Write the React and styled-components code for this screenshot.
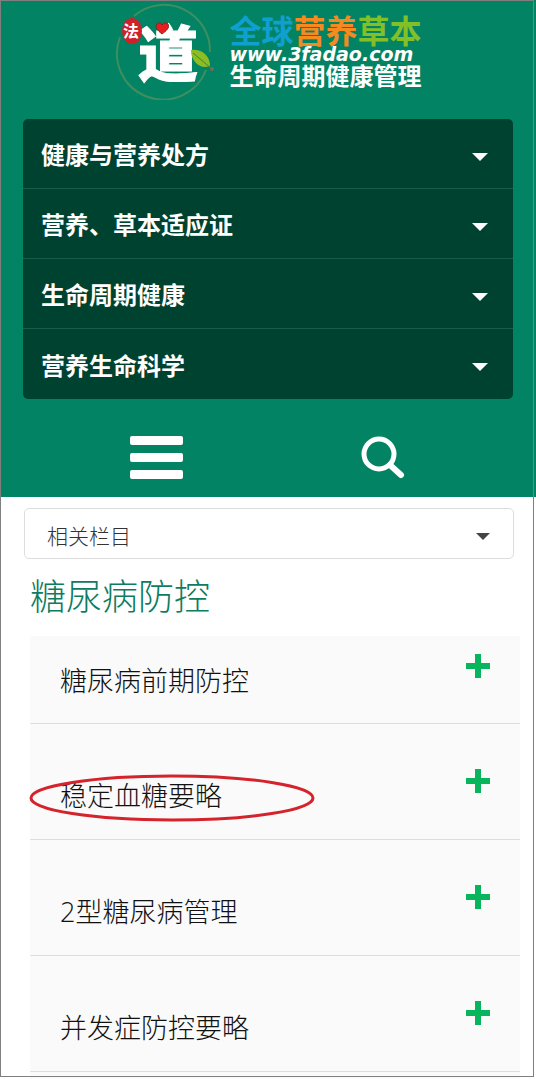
import React, { useState } from 'react';
import styled, { createGlobalStyle } from 'styled-components';

const GlobalStyle = createGlobalStyle`
  * {
    box-sizing: border-box;
  }
  body {
    margin: 0;
    background: #fff;
    font-family: "Open Sans", "Noto Sans CJK SC", sans-serif;
  }
  button, select {
    font-family: inherit;
  }
`;

const Page = styled.div`
  position: relative;
  display: flex;
  flex-direction: column;
  min-height: 100vh;
`;

const Frame = styled.div`
  position: absolute;
  top: 0;
  left: 0;
  right: 2px;
  bottom: 2px;
  border: 1px solid #7f7f7f;
  pointer-events: none;
`;

const Header = styled.header`
  background: #028464;
`;

const Brand = styled.a`
  display: flex;
  justify-content: center;
  gap: 15px;
  height: 119px;
  text-decoration: none;
`;

const BrandText = styled.div`
  display: flex;
  flex-direction: column;
  padding-top: 13px;
  color: #fff;
  white-space: nowrap;
`;

const BrandName = styled.div`
  font-family: "Noto Sans CJK SC", sans-serif;
  font-size: 32px;
  line-height: 33px;
  font-weight: 700;
`;

const Tint = styled.span`
  color: ${(props) => props.$color};
`;

const BrandUrl = styled.div`
  font-family: "DejaVu Sans", sans-serif;
  font-size: 19px;
  line-height: 17px;
  font-weight: 700;
  font-style: italic;
`;

const BrandSlogan = styled.div`
  font-family: "Noto Sans CJK SC", sans-serif;
  font-size: 24px;
  line-height: 24px;
  font-weight: 700;
`;

const Menu = styled.nav`
  margin: 0 23px;
  border-radius: 5px;
  background: #004230;
  overflow: hidden;
`;

const MenuItem = styled.button`
  display: flex;
  align-items: center;
  justify-content: space-between;
  width: 100%;
  height: 70px;
  padding: 0 25px 0 18px;
  border: 0;
  border-bottom: 1px solid #1c5a49;
  background: none;
  color: #fff;
  font-size: 24px;
  font-weight: 700;
  cursor: pointer;

  &:last-child {
    border-bottom: 0;
  }
`;

const Caret = styled.span`
  width: 0;
  height: 0;
  margin-top: 6px;
  border: 8px solid transparent;
  border-top-color: #fff;
  border-bottom: 0;
`;

const Tools = styled.div`
  display: grid;
  grid-template-columns: 1fr 1fr;
  justify-items: center;
  align-items: center;
  height: 98px;
  padding: 18px 40px 0 43px;
`;

const IconButton = styled.button`
  display: flex;
  padding: 0;
  border: 0;
  background: none;
  color: #fff;
  cursor: pointer;
`;

const SelectBox = styled.div`
  position: relative;
  margin: 11px 22px 0 24px;
`;

const Select = styled.select`
  appearance: none;
  display: block;
  width: 100%;
  height: 51px;
  padding: 4px 50px 0 22px;
  border: 1px solid #ddd;
  border-radius: 5px;
  background: #fff;
  color: #333;
  font-size: 21px;
  font-weight: 300;
`;

const SelectCaret = styled.span`
  position: absolute;
  top: 25px;
  right: 24px;
  border: 7px solid transparent;
  border-top-color: #444;
  border-bottom: 0;
  pointer-events: none;
`;

const Title = styled.h1`
  margin: 11px 30px 12px;
  color: #0f7b60;
  font-size: 36px;
  line-height: 54px;
  font-weight: 300;
`;

const List = styled.ul`
  flex: 1;
  margin: 0 16px 0 30px;
  padding: 0;
  background: #fafafa;
  list-style: none;
`;

const Item = styled.li`
  position: relative;
  display: flex;
  align-items: flex-start;
  justify-content: space-between;
  padding: 45px 30px 16px;
  border-bottom: 1px solid #ddd;

  &:first-child {
    padding: 18px 30px 15px;
  }
`;

const ItemLink = styled.a`
  color: #111;
  font-size: 27px;
  line-height: 54px;
  font-weight: 300;
  text-decoration: none;
`;

const Circle = styled.svg`
  position: absolute;
  left: -2px;
  bottom: 17px;
  pointer-events: none;
`;

const menu = ['健康与营养处方', '营养、草本适应证', '生命周期健康', '营养生命科学'];

const topics = [
  { name: '糖尿病前期防控' },
  { name: '稳定血糖要略', marked: true },
  { name: '2型糖尿病管理' },
  { name: '并发症防控要略' },
];

const Emblem = () => (
  <svg width="100" height="100" viewBox="0 0 100 100" fontFamily="Noto Sans CJK SC, sans-serif" fill="#fff">
    <path d="M20 16A46 46 0 0 1 96 52" fill="none" stroke="#3f8e60" strokeWidth="2" />
    <path d="M6 37A46 46 0 1 0 92 70" fill="none" stroke="#3f8e60" strokeWidth="2" />
    <text x="24" y="76" fontSize="60" fontWeight="900" stroke="#fff" strokeWidth="1">道</text>
    <ellipse cx="18" cy="31" rx="10" ry="13" fill="#cf2128" />
    <text x="9" y="37" fontSize="16" fontWeight="700">法</text>
    <path d="M48 34C43 30 41 27 43 24Q46 21 48 25Q51 21 54 24C56 28 52 31 48 34Z" fill="#e91c20" stroke="#6d2f25" />
    <path d="M77 50Q85 49 91 54Q96 59 96 66Q88 69 82 63Q77 58 77 50Z" fill="#8bbd24" />
    <path d="M79 53L98 69" fill="none" stroke="#517f2c" />
    <circle cx="98" cy="69" r="2" fill="#76685a" />
  </svg>
);

const BarsIcon = () => (
  <svg width="53" height="43" viewBox="0 0 53 43" fill="currentColor">
    <rect width="53" height="9" rx="2" />
    <rect y="17" width="53" height="9" rx="2" />
    <rect y="34" width="53" height="9" rx="2" />
  </svg>
);

const SearchIcon = () => (
  <svg width="44" height="44" viewBox="0 0 44 44" fill="none" stroke="currentColor">
    <circle cx="18" cy="19" r="15" strokeWidth="5" />
    <path d="M29 30L40 40" strokeWidth="6" strokeLinecap="round" />
  </svg>
);

const PlusIcon = () => (
  <svg width="24" height="24" viewBox="0 0 24 24" fill="#08b45c">
    <path d="M9 0h6v9h9v6h-9v9h-6v-9h-9v-6h9z" />
  </svg>
);

const App = () => {
  const [openTopic, setOpenTopic] = useState(null);

  return (
    <>
      <GlobalStyle />
      <Page>
        <Header>
          <Brand href="#">
            <Emblem />
            <BrandText>
              <BrandName>
                <Tint $color="#10a0cf">全球</Tint>
                <Tint $color="#f58a20">营养</Tint>
                <Tint $color="#83bf27">草本</Tint>
              </BrandName>
              <BrandUrl>www.3fadao.com</BrandUrl>
              <BrandSlogan>生命周期健康管理</BrandSlogan>
            </BrandText>
          </Brand>
          <Menu>
            {menu.map((name) => (
              <MenuItem key={name} type="button">
                {name}
                <Caret />
              </MenuItem>
            ))}
          </Menu>
          <Tools>
            <IconButton type="button" aria-label="菜单"><BarsIcon /></IconButton>
            <IconButton type="button" aria-label="搜索"><SearchIcon /></IconButton>
          </Tools>
        </Header>
        <SelectBox>
          <Select aria-label="相关栏目">
            <option>相关栏目</option>
          </Select>
          <SelectCaret />
        </SelectBox>
        <Title>糖尿病防控</Title>
        <List>
          {topics.map((topic) => (
            <Item key={topic.name}>
              <ItemLink href="#">{topic.name}</ItemLink>
              <IconButton
                type="button"
                aria-label={'展开' + topic.name}
                aria-expanded={openTopic === topic.name}
                onClick={() => setOpenTopic(openTopic === topic.name ? null : topic.name)}
              >
                <PlusIcon />
              </IconButton>
              {topic.marked && (
                <Circle width="288" height="48" viewBox="0 0 288 48">
                  <ellipse cx="144" cy="24" rx="141" ry="22" fill="none" stroke="#d4232b" strokeWidth="3" />
                </Circle>
              )}
            </Item>
          ))}
        </List>
        <Frame />
      </Page>
    </>
  );
};

export default App;
